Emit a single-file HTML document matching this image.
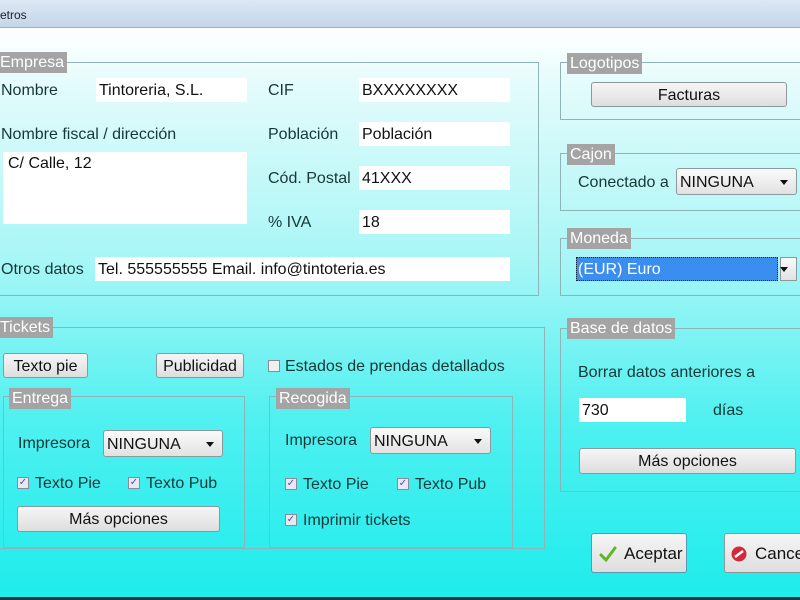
<!DOCTYPE html>
<html><head><meta charset="utf-8"><style>
*{box-sizing:border-box;margin:0;padding:0}
body{width:800px;height:600px;overflow:hidden;position:relative;font-family:"Liberation Sans","DejaVu Sans",sans-serif;font-size:16px;color:#163838;
background:linear-gradient(180deg,#ffffff 28px,#e2fbfb 90px,#a8f6f6 260px,#50f0f0 420px,#1eecec 600px)}
.tb{position:absolute;left:0;top:0;width:800px;height:28px;background:linear-gradient(#dce8f4,#c4d6ea);border-bottom:1px solid #9fb3c8;font-size:12px;color:#222;padding:8px 0 0 0}
.a{position:absolute;white-space:nowrap;margin-top:1px}
.g{position:absolute;border:1px solid #8fb4b8}
.lg{position:absolute;background:#a4a4a4;color:#fff;height:21px;line-height:22px;padding:0 3px;white-space:nowrap}
.in{position:absolute;background:#fff;color:#111;height:24px;line-height:25px;padding-left:3px;white-space:nowrap}
.btn{position:absolute;border:1px solid #8a9a9c;border-radius:3px;background:linear-gradient(#f6f6f6,#dedede);color:#111;text-align:center;white-space:nowrap}
.sel{position:absolute;border:1px solid #8a9a9c;border-radius:3px;background:linear-gradient(#fafafa,#e2e2e2);color:#111;padding-left:3px;white-space:nowrap}
.sel:after{content:"";position:absolute;right:8px;top:50%;margin-top:-2px;border:4px solid transparent;border-top:5px solid #111;border-bottom:0}
.cb{position:absolute;width:12px;height:12px;border:1px solid #8a8a9a;background:#e8e8f2;font-size:10px;line-height:10px;text-align:center;color:#5050a0}
</style></head><body>
<div class="tb">etros</div>

<div class="g" style="left:-1px;top:62px;width:540px;height:234px"></div>
<div class="lg" style="left:-3px;top:52px">Empresa</div>
<div class="a" style="left:1px;top:81px">Nombre</div>
<div class="in" style="left:96px;top:78px;width:151px">Tintoreria, S.L.</div>
<div class="a" style="left:268px;top:81px">CIF</div>
<div class="in" style="left:359px;top:78px;width:151px">BXXXXXXXX</div>
<div class="a" style="left:1px;top:125px">Nombre fiscal / dirección</div>
<div class="a" style="left:268px;top:125px">Población</div>
<div class="in" style="left:359px;top:122px;width:151px">Población</div>
<div class="in" style="left:3px;top:152px;width:244px;height:72px;line-height:24px;padding-left:5px">C/ Calle, 12</div>
<div class="a" style="left:268px;top:169px">Cód. Postal</div>
<div class="in" style="left:359px;top:166px;width:151px">41XXX</div>
<div class="a" style="left:268px;top:213px">% IVA</div>
<div class="in" style="left:359px;top:210px;width:151px">18</div>
<div class="a" style="left:1px;top:260px">Otros datos</div>
<div class="in" style="left:95px;top:257px;width:415px">Tel. 555555555 Email. info@tintoteria.es</div>

<div class="g" style="left:560px;top:62px;width:245px;height:58px"></div>
<div class="lg" style="left:567px;top:53px">Logotipos</div>
<div class="btn" style="left:591px;top:82px;width:196px;height:25px;line-height:25px">Facturas</div>

<div class="g" style="left:560px;top:153px;width:245px;height:58px"></div>
<div class="lg" style="left:567px;top:144px">Cajon</div>
<div class="a" style="left:578px;top:173px">Conectado a</div>
<div class="sel" style="left:676px;top:168px;width:121px;height:27px;line-height:27px">NINGUNA</div>

<div class="g" style="left:560px;top:238px;width:245px;height:58px"></div>
<div class="lg" style="left:567px;top:228px">Moneda</div>
<div class="a" style="left:576px;top:256px;width:202px;height:24px;background:#3a8ef0;border:1px dotted #223;color:#fff;line-height:23px;padding-left:1px">(EUR) Euro</div>
<div class="sel" style="left:780px;top:257px;width:17px;height:24px;border-radius:0"></div>

<div class="g" style="left:560px;top:328px;width:245px;height:164px"></div>
<div class="lg" style="left:567px;top:318px">Base de datos</div>
<div class="a" style="left:578px;top:363px">Borrar datos anteriores a</div>
<div class="in" style="left:579px;top:398px;width:107px">730</div>
<div class="a" style="left:713px;top:401px">días</div>
<div class="btn" style="left:579px;top:448px;width:217px;height:26px;line-height:26px">Más opciones</div>

<div class="g" style="left:-1px;top:327px;width:546px;height:222px"></div>
<div class="lg" style="left:-3px;top:317px">Tickets</div>
<div class="btn" style="left:3px;top:353px;width:85px;height:25px;line-height:25px">Texto pie</div>
<div class="btn" style="left:156px;top:353px;width:88px;height:25px;line-height:25px">Publicidad</div>
<div class="cb" style="left:268px;top:360px;background:#f0f0f0"></div>
<div class="a" style="left:285px;top:357px">Estados de prendas detallados</div>

<div class="g" style="left:3px;top:396px;width:242px;height:152px"></div>
<div class="lg" style="left:9px;top:388px">Entrega</div>
<div class="a" style="left:18px;top:434px">Impresora</div>
<div class="sel" style="left:103px;top:430px;width:120px;height:27px;line-height:27px">NINGUNA</div>
<div class="cb" style="left:17px;top:477px">✓</div>
<div class="a" style="left:35px;top:474px">Texto Pie</div>
<div class="cb" style="left:128px;top:477px">✓</div>
<div class="a" style="left:146px;top:474px">Texto Pub</div>
<div class="btn" style="left:17px;top:506px;width:203px;height:26px;line-height:26px">Más opciones</div>

<div class="g" style="left:269px;top:396px;width:244px;height:152px"></div>
<div class="lg" style="left:276px;top:388px">Recogida</div>
<div class="a" style="left:285px;top:431px">Impresora</div>
<div class="sel" style="left:370px;top:427px;width:121px;height:27px;line-height:27px">NINGUNA</div>
<div class="cb" style="left:285px;top:478px">✓</div>
<div class="a" style="left:303px;top:475px">Texto Pie</div>
<div class="cb" style="left:397px;top:478px">✓</div>
<div class="a" style="left:415px;top:475px">Texto Pub</div>
<div class="cb" style="left:285px;top:514px">✓</div>
<div class="a" style="left:303px;top:511px">Imprimir tickets</div>

<div class="btn" style="left:591px;top:533px;width:96px;height:40px;line-height:40px;border-color:#5a9ab0;padding-left:32px;text-align:left;font-size:17px">Aceptar
<svg style="position:absolute;left:7px;top:11px" width="18" height="18" viewBox="0 0 18 18"><path d="M2 10 L7 15 L16 3" fill="none" stroke="#5cb82a" stroke-width="3" stroke-linecap="round"/></svg></div>
<div class="btn" style="left:724px;top:533px;width:90px;height:40px;line-height:40px;padding-left:30px;text-align:left;font-size:17px">Cancelar
<svg style="position:absolute;left:6px;top:12px" width="16" height="16" viewBox="0 0 16 16"><circle cx="8" cy="8" r="7.5" fill="#d22a3a"/><path d="M4 11 L12 5" stroke="#fff" stroke-width="2.5"/></svg></div>
<div class="a" style="left:0;top:596px;width:800px;height:3px;background:#1a3a40"></div>
</body></html>
